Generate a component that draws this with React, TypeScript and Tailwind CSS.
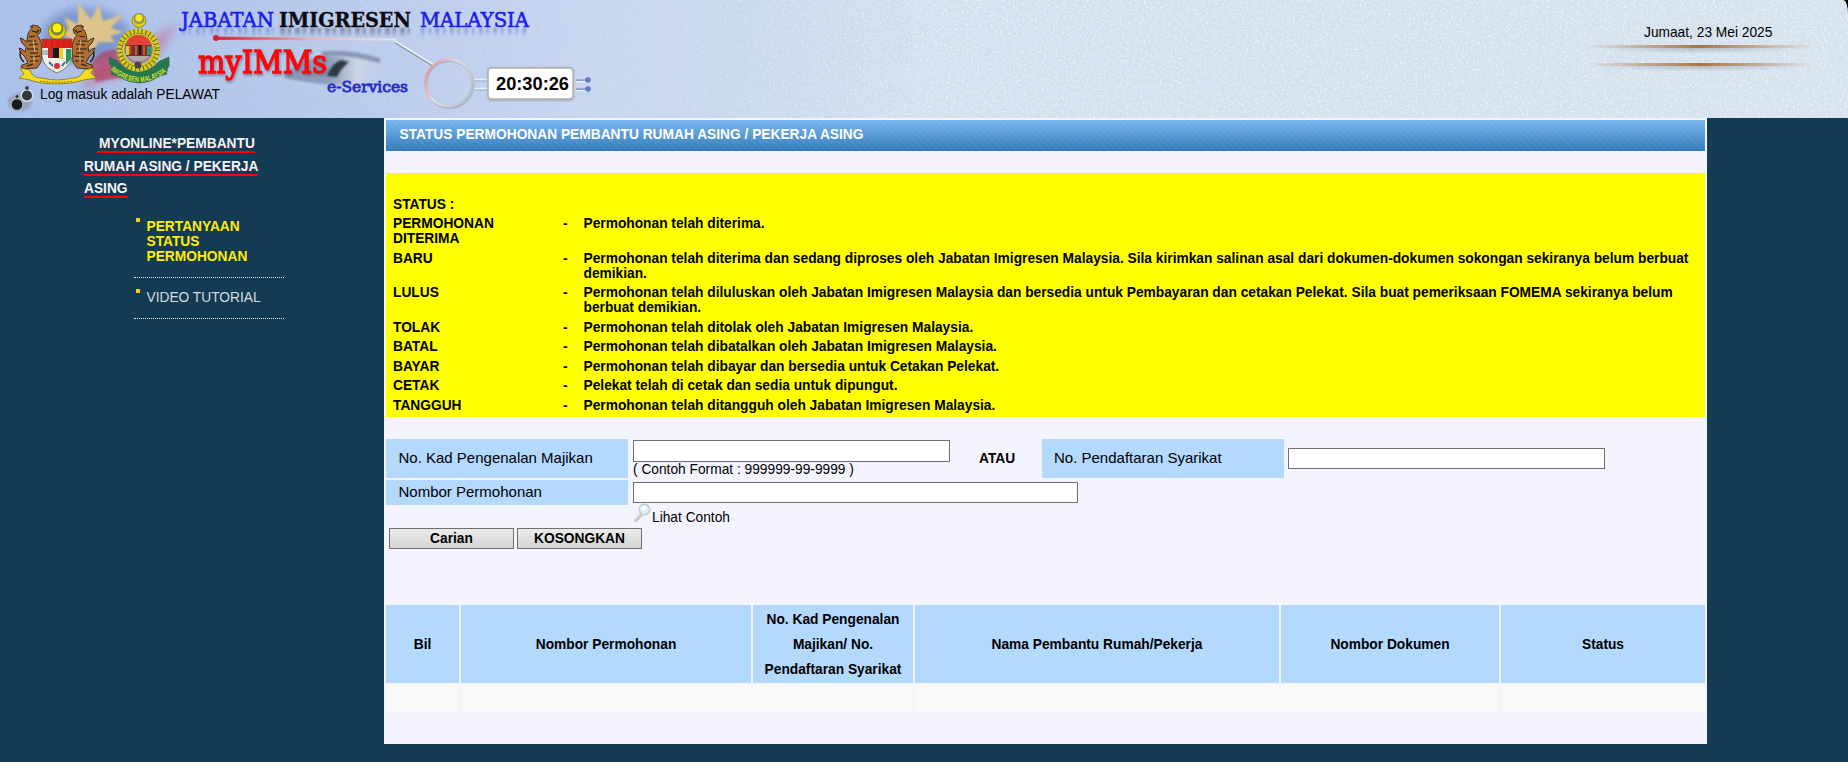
import React from "react";

const statuses: [string, string][] = [
  ["PERMOHONAN DITERIMA", "Permohonan telah diterima."],
  ["BARU", "Permohonan telah diterima dan sedang diproses oleh Jabatan Imigresen Malaysia. Sila kirimkan salinan asal dari dokumen-dokumen sokongan sekiranya belum berbuat demikian."],
  ["LULUS", "Permohonan telah diluluskan oleh Jabatan Imigresen Malaysia dan bersedia untuk Pembayaran dan cetakan Pelekat. Sila buat pemeriksaan FOMEMA sekiranya belum berbuat demikian."],
  ["TOLAK", "Permohonan telah ditolak oleh Jabatan Imigresen Malaysia."],
  ["BATAL", "Permohonan telah dibatalkan oleh Jabatan Imigresen Malaysia."],
  ["BAYAR", "Permohonan telah dibayar dan bersedia untuk Cetakan Pelekat."],
  ["CETAK", "Pelekat telah di cetak dan sedia untuk dipungut."],
  ["TANGGUH", "Permohonan telah ditangguh oleh Jabatan Imigresen Malaysia."],
];

const columns = [
  "Bil",
  "Nombor Permohonan",
  "No. Kad Pengenalan Majikan/ No. Pendaftaran Syarikat",
  "Nama Pembantu Rumah/Pekerja",
  "Nombor Dokumen",
  "Status",
];

function Tiger() {
  return (
    <g>
      <path d="M24 62c-4-3-5-8-3-12" fill="none" stroke="#3a2618" strokeWidth="1.6" />
      <path d="M30 27l3-2 5 1 3 3-1 4-3 2c3 3 5 8 5 13l-1 14-4 6-12 1-4-2 1-2 6-2-3-6-4-4-2-5 3 1 3 3 1-5-4-4-2-5 3 1 4 3c0-6 1-11 6-15z" fill="#b06f30" stroke="#241a16" strokeWidth="0.8" />
      <path d="M29 37l6-1M28 41l8 0M29 45l9-1M27 49l11 0M30 53l8 0M30 57l10-1M30 61l9 0M32 31l4 1M27 66l6-2M36 33l3-3" stroke="#221a16" strokeWidth="1.1" />
      <path d="M33 40l2 12M34 55l0 8" stroke="#e0b878" strokeWidth="1" />
    </g>
  );
}

function Texture() {
  return (
    <svg className="absolute inset-0 h-full w-full" aria-hidden="true">
      <defs>
        <filter id="speckle" x="0" y="0" width="100%" height="100%">
          <feTurbulence type="fractalNoise" baseFrequency="0.45" numOctaves="2" seed="4" />
          <feColorMatrix values="0 0 0 0 1  0 0 0 0 1  0 0 0 0 1  5 0 0 0 -2.6" />
        </filter>
        <linearGradient id="spread" x1="0" x2="1" y1="0" y2="0">
          <stop offset="0" stopColor="#fff" stopOpacity="0.08" />
          <stop offset="0.35" stopColor="#fff" stopOpacity="0.14" />
          <stop offset="0.52" stopColor="#fff" stopOpacity="0.4" />
          <stop offset="1" stopColor="#fff" stopOpacity="0.4" />
        </linearGradient>
        <mask id="spreadMask"><rect width="100%" height="100%" fill="url(#spread)" /></mask>
      </defs>
      <g mask="url(#spreadMask)"><rect width="100%" height="100%" filter="url(#speckle)" /></g>
    </svg>
  );
}

function BannerWords() {
  return (
    <g fontSize="19.5">
      <text x="181" y="26.500" textLength="93" lengthAdjust="spacingAndGlyphs" fill="#1c1cf0" stroke="#1c1cf0" strokeWidth="0.6">JABATAN</text>
      <text x="279" y="26.500" textLength="132" lengthAdjust="spacingAndGlyphs" fontWeight="700" fill="#0b0b12" stroke="#0b0b12" strokeWidth="0.3">IMIGRESEN</text>
      <text x="420" y="26.500" textLength="109" lengthAdjust="spacingAndGlyphs" fill="#1c1cf0" stroke="#1c1cf0" strokeWidth="0.6">MALAYSIA</text>
    </g>
  );
}

function Reflection() {
  return (
    <g fill="none" strokeWidth="8" filter="url(#smear)" mask="url(#reflect)">
      <path d="M182 32H274" stroke="#5468cc" strokeDasharray="3.500 3 2.500 5" />
      <path d="M280 32H410" stroke="#454f68" strokeDasharray="5 2.500 3.500 4" />
      <path d="M421 32H529" stroke="#5468cc" strokeDasharray="3.500 4 2.500 4.500" />
    </g>
  );
}

function Banner() {
  return (
    <svg className="block h-[118px] w-[620px]" viewBox="0 0 620 118">
      <defs>
        <filter id="soft" x="-50%" y="-50%" width="200%" height="200%"><feGaussianBlur stdDeviation="5" /></filter>
        <filter id="soft2" x="-50%" y="-50%" width="200%" height="200%"><feGaussianBlur stdDeviation="1.2" /></filter>
        <filter id="smear" filterUnits="userSpaceOnUse" x="170" y="20" width="380" height="24"><feGaussianBlur stdDeviation="0.9" /></filter>
        <linearGradient id="rod" x1="216" x2="390" y1="0" y2="0" gradientUnits="userSpaceOnUse">
          <stop offset="0" stopColor="#d62030" /><stop offset="0.55" stopColor="#e8b4b8" /><stop offset="1" stopColor="#dfe6ee" />
        </linearGradient>
        <linearGradient id="ring" x1="0" x2="1" y1="0" y2="0.6">
          <stop offset="0" stopColor="#e08488" /><stop offset="0.5" stopColor="#e2dee4" /><stop offset="1" stopColor="#b8c0cc" />
        </linearGradient>
        <linearGradient id="fade" x1="0" x2="0" y1="27" y2="37" gradientUnits="userSpaceOnUse">
          <stop offset="0" stopColor="#fff" stopOpacity="0.6" /><stop offset="1" stopColor="#fff" stopOpacity="0.1" />
        </linearGradient>
        <mask id="reflect" maskUnits="userSpaceOnUse" x="170" y="27" width="380" height="12">
          <rect x="170" y="27" width="380" height="12" fill="url(#fade)" />
        </mask>
        <linearGradient id="hull" x1="0" x2="1" y1="0" y2="0">
          <stop offset="0" stopColor="#7d8cac" /><stop offset="0.45" stopColor="#8594ad" /><stop offset="0.7" stopColor="#cfd8e4" /><stop offset="1" stopColor="#c0cde6" stopOpacity="0.3" />
        </linearGradient>
        <path id="arc" d="M113 67q26 22 53 0" />
      </defs>
      <ellipse cx="86" cy="36" rx="44" ry="28" fill="#6784c2" opacity="0.7" filter="url(#soft)" />
      <path d="M82 96c10-44 28-24 50-42s32-24 46-30c-14 20-20 36-38 46-22 12-42 4-58 26z" fill="#c83a5c" opacity="0.4" filter="url(#soft)" />
      <path d="M90 66q10-18 26-16l14 26-34 6z" fill="#b62d4e" opacity="0.6" filter="url(#soft2)" />
      <path d="M64 17l14 7 0-21 13 16 8-15 4 17 21-7-13 14 13 4-14 4 5 6-16 0-6 8-8-3-12 4-2-12-8-4 6-6z" fill="#dcc48a" filter="url(#soft2)" />
      <Tiger />
      <g transform="translate(114 0) scale(-1 1)"><Tiger /></g>
      <path d="M20 68l10 2c2 6 6 8 12 8q15 4 30 0c7 0 10-3 12-8l10-2-3 5 5 5-12 2q-12 4-27 4-16 0-27-4l-11-2 5-4z" fill="#f2dc1c" stroke="#81701a" strokeWidth="0.8" />
      <path d="M40 81q17 3 33 0" stroke="#9c7d18" fill="none" strokeDasharray="2 1" />
      <circle cx="57" cy="31" r="8.500" fill="#e6d800" stroke="#666018" strokeWidth="0.6" />
      <circle cx="57" cy="29" r="6.500" fill="#7d8240" />
      <circle cx="57" cy="28" r="4.500" fill="#fbf305" />
      <path d="M42 39h30v18q-2 11-15 16-13-5-15-16z" fill="#eef0e9" stroke="#6f5746" strokeWidth="0.8" />
      <path d="M42 39h30v9h-30z" fill="#e2231a" />
      <path d="M46 40v7M52 40v7M58 40v7M64 40v7M69 40v7" stroke="#b8231a" strokeWidth="1.3" />
      <path d="M43 50h5v5h-5z" fill="#a5bccd" />
      <path d="M48 48h6v10h-6z" fill="#c92a25" /><path d="M53 48h6v10h-6z" fill="#171717" />
      <path d="M59 48h4v11h-4z" fill="#f1cd25" /><path d="M66 49h5v10l-5 6z" fill="#29945a" />
      <circle cx="57" cy="66" r="3" fill="#d92e3c" /><path d="M49 62l4 4M62 66l3-4" stroke="#3f6d9c" strokeWidth="2" />
      <path d="M109 57l8 4q21 22 43 0l9-4v9l-3 5 1 3-7 2q-20 14-42 0l-7-2 2-5-3-5z" fill="#23784e" stroke="#35634f" strokeWidth="0.7" />
      <circle cx="138.500" cy="50" r="18" fill="none" stroke="#d8cb1a" strokeWidth="7" />
      <circle cx="138.500" cy="50" r="19" fill="none" stroke="#62622b" strokeWidth="5" strokeDasharray="1 3" />
      <circle cx="138.500" cy="50" r="16.500" fill="none" stroke="#6b6a28" strokeWidth="1" strokeDasharray="1.500 1.500" />
      <circle cx="138.500" cy="49" r="13.500" fill="#b3a6ac" stroke="#58515d" strokeWidth="0.7" />
      <path d="M126 45q2-10 12.500-10t12.500 10z" fill="#e34138" />
      <path d="M126 45h25v11h-25z" fill="#7d2f31" /><path d="M130 46v8M136 46v9M144 45v10" stroke="#c25b2a" strokeWidth="2" /><path d="M140 45v10" stroke="#171717" strokeWidth="2.500" />
      <path d="M126 46h3v9h-3z" fill="#d9cf2a" /><path d="M147 46h4v9h-4z" fill="#309966" /><circle cx="138" cy="65" r="3.500" fill="#47424f" />
      <path d="M112 68q26 22 54 0" fill="none" stroke="#23784e" strokeWidth="7" />
      <circle cx="139" cy="20.500" r="7" fill="#dfcf00" stroke="#6a6835" strokeWidth="0.6" />
      <circle cx="139" cy="18.500" r="5.500" fill="#8a9078" /><circle cx="139" cy="18" r="3.700" fill="#f5ea08" />
      <text className="font-['Liberation_Sans',sans-serif] font-bold" fontSize="7.500" fill="#e8e52c" dy="4">
        <textPath href="#arc" startOffset="0" textLength="56" lengthAdjust="spacingAndGlyphs">IMIGRESEN MALAYSIA</textPath>
      </text>
      <ellipse cx="20" cy="102" rx="12" ry="9" fill="#8791a5" opacity="0.6" filter="url(#soft2)" />
      <circle cx="27" cy="95.500" r="5.800" fill="#343941" stroke="#d5dae0" strokeWidth="1.500" />
      <circle cx="17" cy="104.500" r="6" fill="#17191d" stroke="#a5adb8" strokeWidth="1.500" />
      <circle cx="27" cy="88" r="2.200" fill="#2b2e34" stroke="#c0c5ca" strokeWidth="0.8" />
      <circle cx="17" cy="96.500" r="2" fill="#303238" stroke="#c0c5ca" strokeWidth="0.8" />

      <path d="M284 78c0-7 14-14 36-22l54 2c14 2 18 8 10 15-8 6-26 10-44 12-24-1-40-4-56-7z" fill="url(#hull)" opacity="0.8" filter="url(#soft2)" />
      <path d="M322 54q28-3 58 7" stroke="#65738f" strokeWidth="5" fill="none" opacity="0.6" filter="url(#soft2)" />
      <path d="M327 76q4-12 14-16l8 2q-8 6-12 15z" fill="#2e3844" filter="url(#soft2)" />

      <path d="M216 37l180 2v1l-180-0.500z" fill="url(#rod)" stroke="url(#rod)" strokeWidth="0.8" />
      <circle cx="216" cy="38" r="3" fill="#d62030" />
      <path d="M395 42.500l39 24" stroke="#8490a8" strokeWidth="1.500" />
      <path d="M395 41l39 24" stroke="#eceff4" strokeWidth="1.800" />
      <circle cx="449.500" cy="84" r="23.500" fill="none" stroke="#8f9bb2" strokeWidth="2.500" opacity="0.7" />
      <circle cx="449" cy="83" r="23.500" fill="none" stroke="url(#ring)" strokeWidth="2.600" />
      <path d="M474 79.500h14M474 88.500h14" stroke="#eef1f5" strokeWidth="1.600" /><path d="M474 81h14M474 90h14" stroke="#98a4bb" strokeWidth="0.800" />
      <rect x="487.500" y="67.500" width="86" height="33" rx="4" fill="#9a9fa9" filter="url(#soft2)" />
      <rect x="488" y="68" width="85" height="31" rx="4" fill="#fff" stroke="#b4b2ae" strokeWidth="1.500" />
      <path d="M576 81.500h12M576 90.500h12" stroke="#eef2f8" strokeWidth="1.400" /><path d="M576 80.200h12M576 89.200h12" stroke="#6f88bd" strokeWidth="1.200" />
      <circle cx="588" cy="80" r="2.800" fill="#5c7dbd" /><circle cx="588" cy="89" r="2.800" fill="#5c7dbd" />

      <g className="font-['DejaVu_Serif','Liberation_Serif',serif]">
        <Reflection />
        <BannerWords />
        <text x="198" y="72.500" textLength="129" lengthAdjust="spacingAndGlyphs" fontSize="31" fill="#fb0808" stroke="#fb0808" strokeWidth="1.300" className="drop-shadow-[1px_2px_1px_rgba(70,75,100,0.5)]">myIMMs</text>
        <text x="327" y="91.500" textLength="81" lengthAdjust="spacingAndGlyphs" fontSize="14.500" fill="#2a2cc4" stroke="#2a2cc4" strokeWidth="0.800">e-Services</text>
      </g>
      <text x="496" y="90" textLength="73" lengthAdjust="spacingAndGlyphs" className="font-['Liberation_Sans',sans-serif] font-bold" fontSize="18" fill="#000">20:30:26</text>
      <text x="40" y="99" textLength="180" lengthAdjust="spacingAndGlyphs" className="font-['Liberation_Sans',sans-serif]" fontSize="14" fill="#000">Log masuk adalah PELAWAT</text>
    </svg>
  );
}

function Rule() {
  return (
    <div>
      <div className="h-[3px] bg-linear-to-r from-[#ad7440]/0 via-[#ad7440] to-[#ad7440]/0" />
      <div className="h-[6px] bg-[radial-gradient(ellipse_at_top,rgba(120,130,150,0.4),transparent_65%)]" />
    </div>
  );
}

function Header() {
  return (
    <header className="relative h-[118px] w-full overflow-hidden bg-black">
      <div className="relative flex h-full justify-between overflow-hidden rounded-tr-[5px_14px] bg-[linear-gradient(90deg,#a9c0ea_0px,#b3c5ea_200px,#bccdec_400px,#c9d6f0_600px,#cbd9ee_750px,#d5e0ee_930px,#d7e2ef_100%)]">
        <Texture />
        <div className="relative"><Banner /></div>
        <div className="relative mr-[34px] w-[228px] pt-[25px]">
          <p className="pl-[58px] text-[13.75px] leading-[16px] whitespace-nowrap text-black">Jumaat, 23 Mei 2025</p>
          <div className="mt-[4px] flex flex-col gap-[9px]"><Rule /><Rule /></div>
        </div>
      </div>
    </header>
  );
}

function Sidebar() {
  return (
    <aside className="w-[384px] shrink-0 pt-[14px] pl-[84px]">
      <div className="text-[13.75px] font-bold text-[#f3f3f3]">
        <div className="flex h-[23px]"><span className="ml-[13px] h-[21px] border-b-2 border-[#f00] pl-[2px] leading-[23px]">MYONLINE*PEMBANTU</span></div>
        <div className="flex h-[22px]"><span className="h-[21px] border-b-2 border-[#f00] leading-[23px]">RUMAH ASING / PEKERJA</span></div>
        <div className="flex h-[23px]"><span className="h-[21px] border-b-2 border-[#f00] leading-[23px]">ASING</span></div>
      </div>
      <ul className="mt-[14px] ml-[50px] w-[150px] text-[13.75px]">
        <li className="flex h-[64px] border-b border-dotted border-[#e4e8ea] pl-[2px]">
          <span className="mt-[4px] size-[4px] bg-[#fc0]" />
          <a className="mt-[4px] ml-[6.500px] w-[110px] pt-[1px] leading-[15px] font-bold text-[#ffed00]">PERTANYAAN STATUS PERMOHONAN</a>
        </li>
        <li className="mt-[7px] flex h-[34px] border-b border-dotted border-[#e4e8ea] pl-[2px]">
          <span className="mt-[4px] size-[4px] bg-[#fc0]" />
          <a className="mt-[5px] ml-[6.500px] leading-[15px] whitespace-nowrap text-[#d5dce0]">VIDEO TUTORIAL</a>
        </li>
      </ul>
    </aside>
  );
}

function StatusLegend() {
  return (
    <section className="mt-[22px] h-[244px] bg-[#ff0] pt-[24px] pl-[7px] text-[13.75px] leading-[15px] font-bold">
      <div className="h-[19.4px]">STATUS :</div>
      {statuses.map(([name, text]) => (
        <div key={name} className="grid grid-cols-[170px_20.5px_1112px] pb-[4.52px]">
          <div className="w-[125px]">{name}</div>
          <div>-</div>
          <div>{text}</div>
        </div>
      ))}
    </section>
  );
}

const field = "block rounded-none border border-[#707070] bg-white px-1 text-[13.75px] outline-none";
const label = "flex items-center bg-[#b3d9ff] text-[15px]";
const button = "h-[21px] w-[125px] border border-[#707070] bg-linear-to-b from-[#ececec] to-[#d4d4d4] text-center text-[13.75px] leading-[18px] font-bold";

function SearchForm() {
  return (
    <form className="mt-[22px]">
      <div className="flex h-[39px]">
        <label className={`${label} w-[242px] pl-[12.5px]`}>No. Kad Pengenalan Majikan</label>
        <div className="ml-[5px] w-[317px] pt-px">
          <input className={`${field} h-[22px] w-full`} />
          <p className="text-[13.75px] leading-[15px]">( Contoh Format : 999999-99-9999 )</p>
        </div>
        <div className="flex w-[92px] items-center pt-[2px] pl-[29px] text-[13.75px] font-bold">ATAU</div>
        <label className={`${label} w-[242px] pl-[12px]`}>No. Pendaftaran Syarikat</label>
        <div className="ml-[4px] flex items-center"><input className={`${field} h-[21px] w-[317px]`} /></div>
      </div>
      <div className="mt-[2px] flex h-[25px]">
        <label className={`${label} w-[242px] pl-[12.5px]`}>Nombor Permohonan</label>
        <input className={`${field} mt-[2px] ml-[5px] h-[21px] w-[445px]`} />
      </div>
      <div className="flex h-[23px] pl-[247px] text-[13.75px]">
        <svg className="-mt-[2px] h-[20px] w-[19px]" viewBox="0 0 19 20">
          <path d="M2.500 17.500l6-6" stroke="#c3c4c8" strokeWidth="3.200" strokeLinecap="round" />
          <path d="M2 17l6-6" stroke="#e4e4e6" strokeWidth="1" strokeLinecap="round" />
          <circle cx="11.500" cy="6.500" r="5.200" fill="#dff1fb" stroke="#c3cad2" strokeWidth="1.600" />
          <ellipse cx="10.500" cy="5" rx="2.800" ry="2" fill="#f8fdff" />
        </svg>
        <span className="pt-[5px] leading-[15px]">Lihat Contoh</span>
      </div>
      <div className="flex gap-[3px] pl-[3px]">
        <button type="button" className={button}>Carian</button>
        <button type="button" className={button}>KOSONGKAN</button>
      </div>
    </form>
  );
}

function Results() {
  return (
    <section className="mt-[56px] grid grid-cols-[73px_290px_160px_364px_218px_204px] gap-[2px]">
      {columns.map((c) => (
        <div key={c} className="flex h-[78px] items-center justify-center bg-[#b3d9ff] px-[10px] text-center text-[13.75px] leading-[25px] font-bold">{c}</div>
      ))}
      {columns.map((c) => <div key={`${c}-value`} className="h-[27px] bg-[#f9f9f9]" />)}
    </section>
  );
}

export default function App() {
  return (
    <div className="h-[762px] w-[1848px] overflow-hidden bg-[#143b54] font-['Liberation_Sans',Arial,sans-serif] text-black">
      <Header />
      <div className="flex">
        <Sidebar />
        <main className="h-[626px] w-[1323px] bg-[#f4f4ff] px-[2px] pt-[2px]">
          <h1 className="h-[31px] bg-[repeating-linear-gradient(45deg,rgba(255,255,255,0.04)_0px,rgba(255,255,255,0.04)_2px,transparent_2px,transparent_5px),linear-gradient(#7ab6f3,#327bb8)] pl-[13.5px] text-[13.75px] leading-[30px] font-bold whitespace-nowrap text-white">STATUS PERMOHONAN PEMBANTU RUMAH ASING / PEKERJA ASING</h1>
          <StatusLegend />
          <SearchForm />
          <Results />
        </main>
      </div>
    </div>
  );
}
